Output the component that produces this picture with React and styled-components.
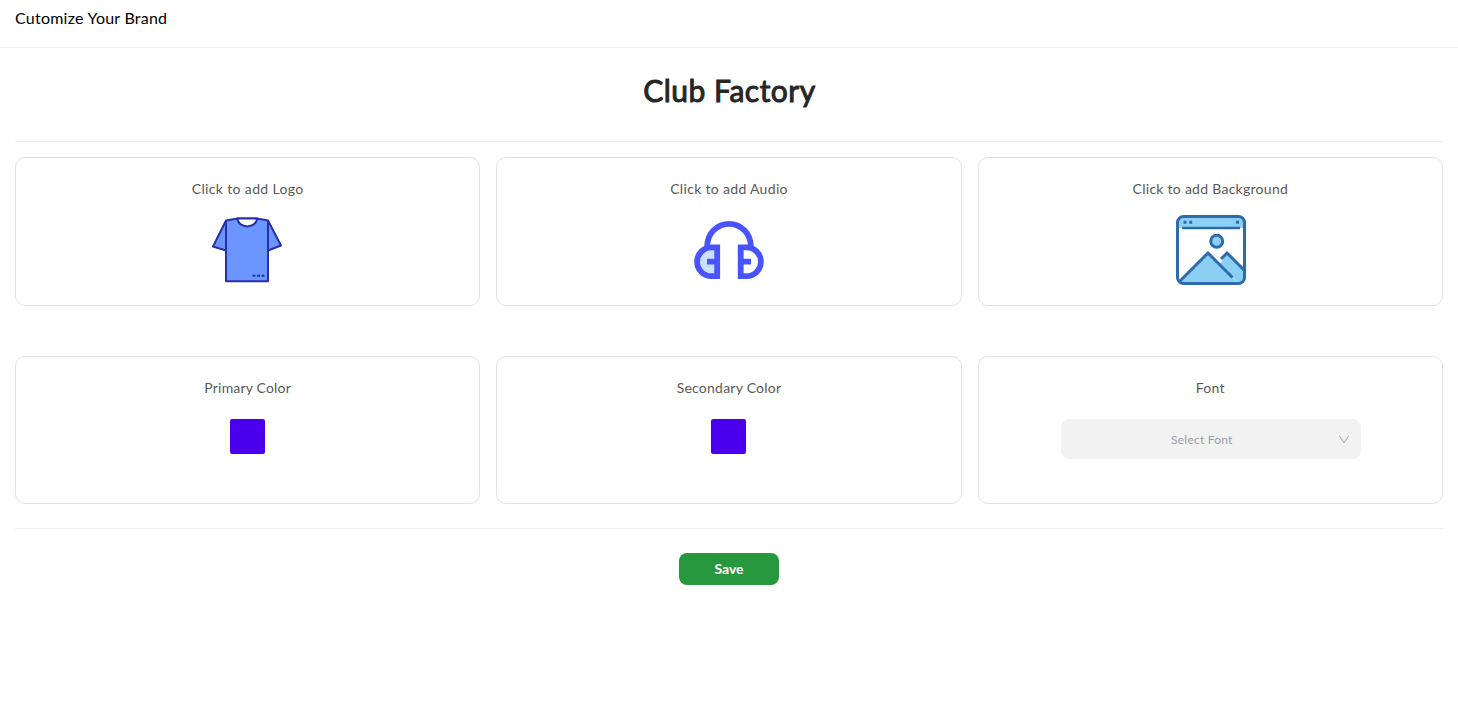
import React from "react";
import styled, { createGlobalStyle } from "styled-components";

const GlobalStyle = createGlobalStyle`
  * { box-sizing: border-box; }
  body {
    margin: 0;
    background: #fff;
    font-family: Lato, "Open Sans", sans-serif;
    overflow: hidden;
  }
`;

const Header = styled.header`
  height: 48px;
  padding: 6px 15px 0;
  border-bottom: 1px solid #f0f0f0;
  color: #000;
  font-size: 16px;
  line-height: 24px;
  letter-spacing: 0.24px;
`;

const Main = styled.main`
  display: flex;
  flex-direction: column;
  align-items: center;
  padding: 0 15px;
`;

const BrandName = styled.h1`
  height: 93px;
  margin: 0;
  padding: 22px 0 0 1px;
  color: #262626;
  font-size: 30px;
  font-weight: 400;
  line-height: 40px;
  letter-spacing: 0.5px;
  -webkit-text-stroke: 1px #262626;
`;

const Divider = styled.hr`
  width: 100%;
  height: 1px;
  margin: 0;
  border: 0;
  background: #f0f0f0;
`;

const Grid = styled.section`
  display: grid;
  grid-template-columns: repeat(3, 1fr);
  grid-template-rows: 149px 148px;
  column-gap: 16px;
  row-gap: 50px;
  width: 100%;
  margin: 15px 0 24px;
`;

const Card = styled.div`
  display: flex;
  flex-direction: column;
  align-items: center;
  padding-top: 20px;
  border: 1px solid #e2e2e2;
  border-radius: 10px;
`;

const Label = styled.div`
  color: #595959;
  font-size: 14px;
  line-height: 22px;
  letter-spacing: ${(p) => p.$tracking || "0.27px"};
`;

const Picture = styled.svg`
  display: block;
  width: 70px;
  height: 70px;
  margin: 15px 0 0 ${(p) => p.$shift || 0}px;
`;

const Swatch = styled.button`
  width: 35px;
  height: 35px;
  margin-top: 20px;
  padding: 0;
  border: 0;
  border-radius: 2px;
  background: ${(p) => p.$color};
`;

const Select = styled.div`
  display: flex;
  align-items: center;
  width: 300px;
  height: 40px;
  margin: 20px 0 0 1px;
  padding: 0 11px;
  border-radius: 8px;
  background: #f2f2f2;
  color: #9c9ca6;
  font-size: 12px;
  letter-spacing: 0.22px;
`;

const Placeholder = styled.span`
  flex: 1;
  padding-right: 6px;
  text-align: center;
`;

const Chevron = styled.svg`
  width: 12px;
  height: 12px;
`;

const SaveButton = styled.button`
  width: 100px;
  height: 32px;
  margin-top: 24px;
  padding: 0 0 2px;
  border: 0;
  border-radius: 8px;
  background: #28983f;
  color: #fff;
  font-family: inherit;
  font-size: 14px;
  font-weight: 700;
`;

const ShirtIcon = () => (
  <Picture $shift={-1} viewBox="0 0 70 70" fill="#6b96ff" stroke="#2a2fa8" strokeWidth="2" strokeLinejoin="round">
    <path d="M14 5.500 L1 31.500 L14 35.500 M56 5.500 L69 30.500 L56 35.500" />
    <path d="M14 5.500 L25.500 3.500 H45 L56 5.500 V66.300 H14 Z" />
    <path d="M25.500 3.500 C26 14 44.500 14 45 3.500 Z" fill="#fff" />
    <path d="M40.500 60.800 h13" fill="none" strokeDasharray="3 1.500" />
  </Picture>
);

const HeadphonesIcon = () => (
  <Picture viewBox="0 0 70 70" fill="none" stroke="#4754ff" strokeWidth="5.8">
    <path d="M23.200 32.400 H17.500 A14.400 14.400 0 0 0 17.500 61.200 H23.200 Z" fill="#cbdfff" />
    <path d="M46.700 32.400 H52.500 A14.400 14.400 0 0 1 52.500 61.200 H46.700 Z" />
    <path d="M13.200 32.500 V31 A21.800 22.200 0 0 1 56.800 31 V32.500" />
    <path d="M13 46.700 H23 M47 46.700 H57" />
  </Picture>
);

const BackgroundIcon = () => (
  <Picture $shift={1} viewBox="0 0 70 70" fill="none" stroke="#2e6baa" strokeWidth="3">
    <path d="M1.500 13 V7 Q1.500 1.500 7 1.500 H63 Q68.500 1.500 68.500 7 V13 Z" fill="#8bd0f4" stroke="none" />
    <path d="M3 67 L32 38 L44 49 L51 38 L68.500 55 V63 Q68.500 68.500 63 68.500 H7 Z" fill="#8bd0f4" stroke="none" />
    <rect x="1.500" y="1.500" width="67" height="67" rx="6" />
    <path d="M6 13 H64" strokeWidth="2.500" />
    <path d="M7.500 7.300 h3 M13.200 7.300 h3 M60 7.300 h3" />
    <circle cx="40.700" cy="26.300" r="6" fill="#8bd0f4" />
    <path d="M3 67 L32 38 L56.500 62.500 M45 44 L51 38 L68 55" />
    <path d="M57 63 L61 67" stroke="#c8e9fa" strokeWidth="0.7" />
  </Picture>
);

export default function App() {
  return (
    <>
      <GlobalStyle />
      <Header>Cutomize Your Brand</Header>
      <Main>
        <BrandName>Club Factory</BrandName>
        <Divider />
        <Grid>
          <Card>
            <Label $tracking="0.36px">Click to add Logo</Label>
            <ShirtIcon />
          </Card>
          <Card>
            <Label $tracking="0.32px">Click to add Audio</Label>
            <HeadphonesIcon />
          </Card>
          <Card>
            <Label>Click to add Background</Label>
            <BackgroundIcon />
          </Card>
          <Card>
            <Label $tracking="0.18px">Primary Color</Label>
            <Swatch $color="#4b00ed" aria-label="Primary Color" />
          </Card>
          <Card>
            <Label $tracking="0.24px">Secondary Color</Label>
            <Swatch $color="#4b00ed" aria-label="Secondary Color" />
          </Card>
          <Card>
            <Label>Font</Label>
            <Select>
              <Placeholder>Select Font</Placeholder>
              <Chevron viewBox="0 0 12 12" fill="none" stroke="#b0b0b0" strokeWidth="1.1">
                <path d="M1.300 2.700 L6 9.500 L10.700 2.700" />
              </Chevron>
            </Select>
          </Card>
        </Grid>
        <Divider />
        <SaveButton>Save</SaveButton>
      </Main>
    </>
  );
}
